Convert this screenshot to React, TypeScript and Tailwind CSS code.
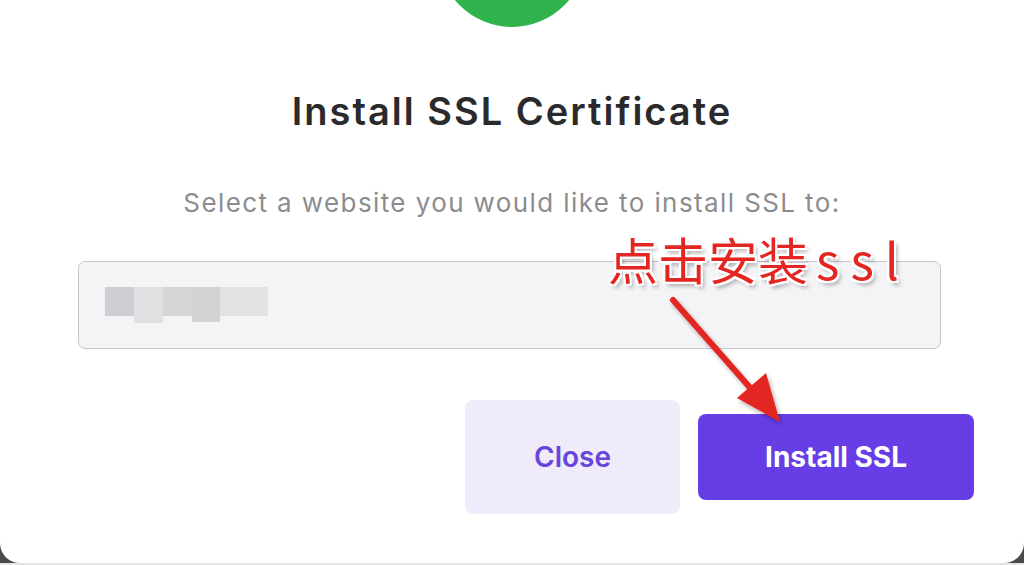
import React from "react";

const annoStyle =
  "[text-shadow:0_0_2px_#fff,1px_1px_0_#fff,-1px_-1px_0_#fff,1px_-1px_0_#fff,-1px_1px_0_#fff,2px_2px_0_#fff,-2px_-2px_0_#fff,2px_-2px_0_#fff,-2px_2px_0_#fff,3px_4px_4px_rgba(0,0,0,0.35)]";

export default function App() {
  return (
    <div className="w-[1024px] h-[565px] bg-[#4a4a4a] flex flex-col overflow-hidden relative">
      <div
        className="flex-1 bg-white rounded-b-[20px] flex flex-col items-center relative"
        style={{ fontFamily: "Inter, 'Noto Sans', sans-serif" }}
      >
        <div className="w-[148px] h-[148px] rounded-full bg-[#2fb44d] mt-[-121px] shrink-0" />
        <h1 className="mt-[62px] text-[38px] leading-[44px] font-semibold text-[#2a2a2c] tracking-[2px]">
          Install SSL Certificate
        </h1>
        <p className="mt-[54px] text-[26px] leading-[32px] text-[#8c8c90] tracking-[1.4px]">
          Select a website you would like to install SSL to:
        </p>
        <div className="self-start ml-[78px] mt-[42px] w-[863px] h-[88px] rounded-[7px] border border-[#c8c8cc] bg-[#f4f4f7] flex items-center pl-[26px]">
          <div className="flex items-start">
            <div className="w-[29px] h-[29px] bg-[#cfcfd3]" />
            <div className="w-[29px] h-[36px] bg-[#e1e1e4]" />
            <div className="w-[29px] h-[29px] bg-[#d5d5d8]" />
            <div className="w-[28px] h-[35px] bg-[#d3d3d6]" />
            <div className="w-[48px] h-[29px] bg-[#e2e2e5]" />
          </div>
        </div>
        <div className="self-stretch flex justify-end items-center gap-[18px] pr-[50px] mt-[51px]">
          <button className="w-[215px] h-[114px] rounded-[8px] bg-[#efebfb] text-[#6746dc] text-[28px] font-semibold">
            Close
          </button>
          <button className="w-[276px] h-[86px] rounded-[8px] bg-[#673de6] text-white text-[28px] font-bold">
            Install SSL
          </button>
        </div>

        <div
          className={`absolute left-[608px] top-[228px] text-[50px] leading-[60px] text-[#e32622] ${annoStyle}`}
          style={{ fontFamily: "'Noto Sans CJK SC', 'Noto Sans', sans-serif" }}
        >
          点击安装<span className="tracking-[11px] ml-[8px]">ssl</span>
        </div>

        <svg
          className="absolute left-[650px] top-[280px]"
          width="160"
          height="160"
          viewBox="650 280 160 160"
        >
          <defs>
            <filter id="sh" x="-20%" y="-20%" width="140%" height="140%">
              <feDropShadow dx="2" dy="3" stdDeviation="2" floodColor="#000" floodOpacity="0.3" />
            </filter>
          </defs>
          <g filter="url(#sh)">
            <line x1="673" y1="300" x2="760" y2="399" stroke="#e32622" strokeWidth="6" strokeLinecap="round" />
            <polygon points="780,422 737,398 766,373" fill="#e32622" />
          </g>
        </svg>
      </div>
      <div className="h-[2px] bg-[#e4e4e6] shrink-0" />
    </div>
  );
}
